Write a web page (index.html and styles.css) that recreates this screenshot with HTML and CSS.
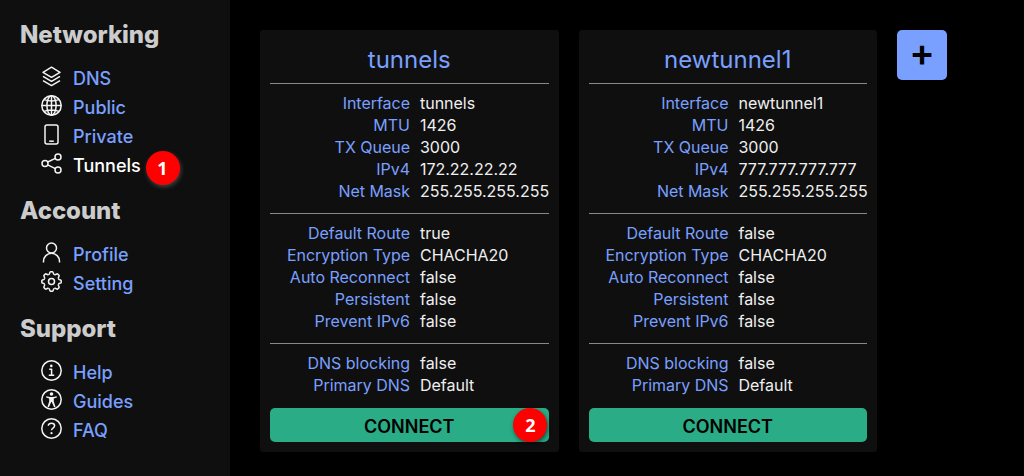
FILE: index.html
```html
<!DOCTYPE html>
<html lang="en">
<head>
<meta charset="utf-8">
<title>Tunnels</title>
<link rel="stylesheet" href="styles.css">
</head>
<body>
<nav class="sidebar">
  <section class="menu">
    <h2 class="menu-title">Networking</h2>
    <a class="item"><svg class="icon" viewBox="0 0 21 21"><path d="M10.5 1.2 19 6.3 10.5 11.3 2 6.3Z"/><path d="m2 10.3 8.5 5 8.5-5M2 14.6l8.5 5 8.5-5"/></svg>DNS</a>
    <a class="item"><svg class="icon" viewBox="0 0 21 21"><circle cx="10.5" cy="10.5" r="9.7"/><ellipse cx="10.5" cy="10.5" rx="4.6" ry="9.7"/><path d="M10.5.8v19.4M.8 10.5h19.4M3.2 4.6q7.3 2.6 14.6 0M3.2 16.4q7.3-2.6 14.6 0"/></svg>Public</a>
    <a class="item"><svg class="icon" viewBox="0 0 21 21"><rect x="4" y="1" width="13" height="19" rx="2"/><path d="M8.2 17.2h4.6"/></svg>Private</a>
    <a class="item active"><svg class="icon" viewBox="0 0 21 21"><circle cx="4" cy="10.4" r="3"/><circle cx="17" cy="4" r="3"/><circle cx="17" cy="17" r="3"/><path d="m6.7 9 7.6-3.7M6.7 11.8l7.6 3.8"/></svg><span class="marked">Tunnels<span class="badge badge-nav">1</span></span></a>
  </section>
  <section class="menu">
    <h2 class="menu-title">Account</h2>
    <a class="item"><svg class="icon" viewBox="0 0 21 21"><circle cx="10.5" cy="6" r="5"/><path d="M2.5 20.4v-1.1a8 8 0 0 1 16 0v1.1"/></svg>Profile</a>
    <a class="item"><svg class="icon" viewBox="0 0 21 21"><defs><path id="tooth" d="M-3-7.25C-1.7-6.7-2-9.7-1-9.7H1C2-9.7 1.7-6.7 3-7.25"/></defs><g transform="translate(10.5 10.5)"><circle r="3"/><use href="#tooth"/><use href="#tooth" transform="rotate(45)"/><use href="#tooth" transform="rotate(90)"/><use href="#tooth" transform="rotate(135)"/><use href="#tooth" transform="rotate(180)"/><use href="#tooth" transform="rotate(225)"/><use href="#tooth" transform="rotate(270)"/><use href="#tooth" transform="rotate(315)"/></g></svg>Setting</a>
  </section>
  <section class="menu">
    <h2 class="menu-title">Support</h2>
    <a class="item"><svg class="icon" viewBox="0 0 21 21"><circle cx="10.5" cy="10.5" r="9.7"/><path d="M8.2 9.2h2.4v6M7.8 15.2h5.4"/><circle class="solid" cx="10.3" cy="5.9" r="1.3"/></svg>Help</a>
    <a class="item"><svg class="icon" viewBox="0 0 21 21"><circle cx="10.5" cy="10.5" r="9.7"/><circle class="solid" cx="10.5" cy="5" r="1.8"/><path class="solid" d="M5.3 7.3 9 8.1h3l3.7-.8.2 1.3-3.1 1v2.8l1.7 5.3-1.4.5-2.3-5.3h-.6l-2.3 5.3-1.4-.5 1.7-5.3V9.6l-3.1-1Z"/></svg>Guides</a>
    <a class="item"><svg class="icon" viewBox="0 0 21 21"><circle cx="10.5" cy="10.5" r="9.7"/><path d="M7.3 7.8C7.3 4.3 13.6 4.5 13.6 7.7c0 2.4-3.1 2.3-3.1 4.6"/><circle class="solid" cx="10.5" cy="15.2" r="1.1"/></svg>FAQ</a>
  </section>
</nav>
<main class="tunnels">
  <article class="card">
    <h1 class="card-title">tunnels</h1>
    <dl class="props">
      <dt>Interface</dt><dd>tunnels</dd>
      <dt>MTU</dt><dd>1426</dd>
      <dt>TX Queue</dt><dd>3000</dd>
      <dt>IPv4</dt><dd>172.22.22.22</dd>
      <dt>Net Mask</dt><dd>255.255.255.255</dd>
    </dl>
    <dl class="props">
      <dt>Default Route</dt><dd>true</dd>
      <dt>Encryption Type</dt><dd>CHACHA20</dd>
      <dt>Auto Reconnect</dt><dd>false</dd>
      <dt>Persistent</dt><dd>false</dd>
      <dt>Prevent IPv6</dt><dd>false</dd>
    </dl>
    <dl class="props">
      <dt>DNS blocking</dt><dd>false</dd>
      <dt>Primary DNS</dt><dd>Default</dd>
    </dl>
    <button class="connect">CONNECT<span class="badge badge-connect">2</span></button>
  </article>
  <article class="card">
    <h1 class="card-title">newtunnel1</h1>
    <dl class="props">
      <dt>Interface</dt><dd>newtunnel1</dd>
      <dt>MTU</dt><dd>1426</dd>
      <dt>TX Queue</dt><dd>3000</dd>
      <dt>IPv4</dt><dd>777.777.777.777</dd>
      <dt>Net Mask</dt><dd>255.255.255.255</dd>
    </dl>
    <dl class="props">
      <dt>Default Route</dt><dd>false</dd>
      <dt>Encryption Type</dt><dd>CHACHA20</dd>
      <dt>Auto Reconnect</dt><dd>false</dd>
      <dt>Persistent</dt><dd>false</dd>
      <dt>Prevent IPv6</dt><dd>false</dd>
    </dl>
    <dl class="props">
      <dt>DNS blocking</dt><dd>false</dd>
      <dt>Primary DNS</dt><dd>Default</dd>
    </dl>
    <button class="connect">CONNECT</button>
  </article>
  <button class="add">+</button>
</main>
</body>
</html>
```
FILE: styles.css
```css
* { box-sizing: border-box; }
body {
  margin: 0;
  height: 476px;
  display: flex;
  overflow: hidden;
  background: #000;
  color: #f0f0f0;
  font-family: Inter, sans-serif;
  font-size: 16px;
}
.sidebar {
  width: 230px;
  flex: none;
  padding: 4px 0 0 20px;
  background: #0f0f0f;
}
.menu-title {
  margin: 0;
  height: 60px;
  padding-top: 16px;
  line-height: 30px;
  font-size: 24px;
  font-weight: 800;
  letter-spacing: -.05px;
  color: #ccc;
}
.item {
  display: flex;
  align-items: center;
  gap: 11px;
  height: 29px;
  padding-left: 21px;
  font-size: 18px;
  font-weight: 500;
  color: #7aa0ff;
}
.item.active { color: #fff; }
.icon {
  width: 21px;
  height: 21px;
  flex: none;
  margin-top: -4px;
  overflow: visible;
  fill: none;
  stroke: #f4f4f4;
  stroke-width: 1.5;
  stroke-linejoin: round;
}
.icon .solid { fill: #f4f4f4; stroke: none; }
.marked { position: relative; }
.badge {
  position: absolute;
  width: 34px;
  height: 34px;
  border-radius: 50%;
  background: #f00;
  box-shadow: 1px 2px 4px rgba(90, 90, 90, .7);
  color: #fff;
  font: 700 18px/34px "Open Sans", sans-serif;
  text-align: center;
}
.badge-nav { left: 72.5px; top: -4px; }
.badge-connect { right: 1.2px; top: 0; box-shadow: 1px 2px 4px rgba(0, 0, 0, .55); }
.tunnels {
  display: flex;
  align-items: flex-start;
  gap: 20px;
  padding: 30px;
}
.card {
  width: 298.5px;
  height: 422px;
  padding: 10px;
  border-radius: 3px;
  background: #0f0f0f;
}
.card-title {
  margin: 0;
  height: 43px;
  line-height: 40px;
  font-size: 24px;
  font-weight: 400;
  text-align: center;
  color: #7aa0ff;
}
.props {
  display: grid;
  grid-template-columns: 140px auto;
  column-gap: 10px;
  justify-content: start;
  margin: 0;
  padding: 8px 0 11px;
  border-top: 1px solid #888;
  line-height: 22px;
  letter-spacing: -.02px;
  white-space: nowrap;
}
.props dt { text-align: right; color: #7aa0ff; }
.props dd { margin: 0; }
.connect {
  position: relative;
  display: block;
  width: 100%;
  height: 34px;
  margin-top: 1px;
  padding: 3px 0 0;
  border: 0;
  border-radius: 5px;
  background: #2aac86;
  color: #000;
  font: 600 18px/31px Inter, sans-serif;
}
.add {
  width: 50px;
  height: 50px;
  padding: 0 0 5px;
  border: 0;
  border-radius: 5px;
  background: #7aa0ff;
  color: #000;
  font: 600 38px/45px Inter, sans-serif;
}
```
